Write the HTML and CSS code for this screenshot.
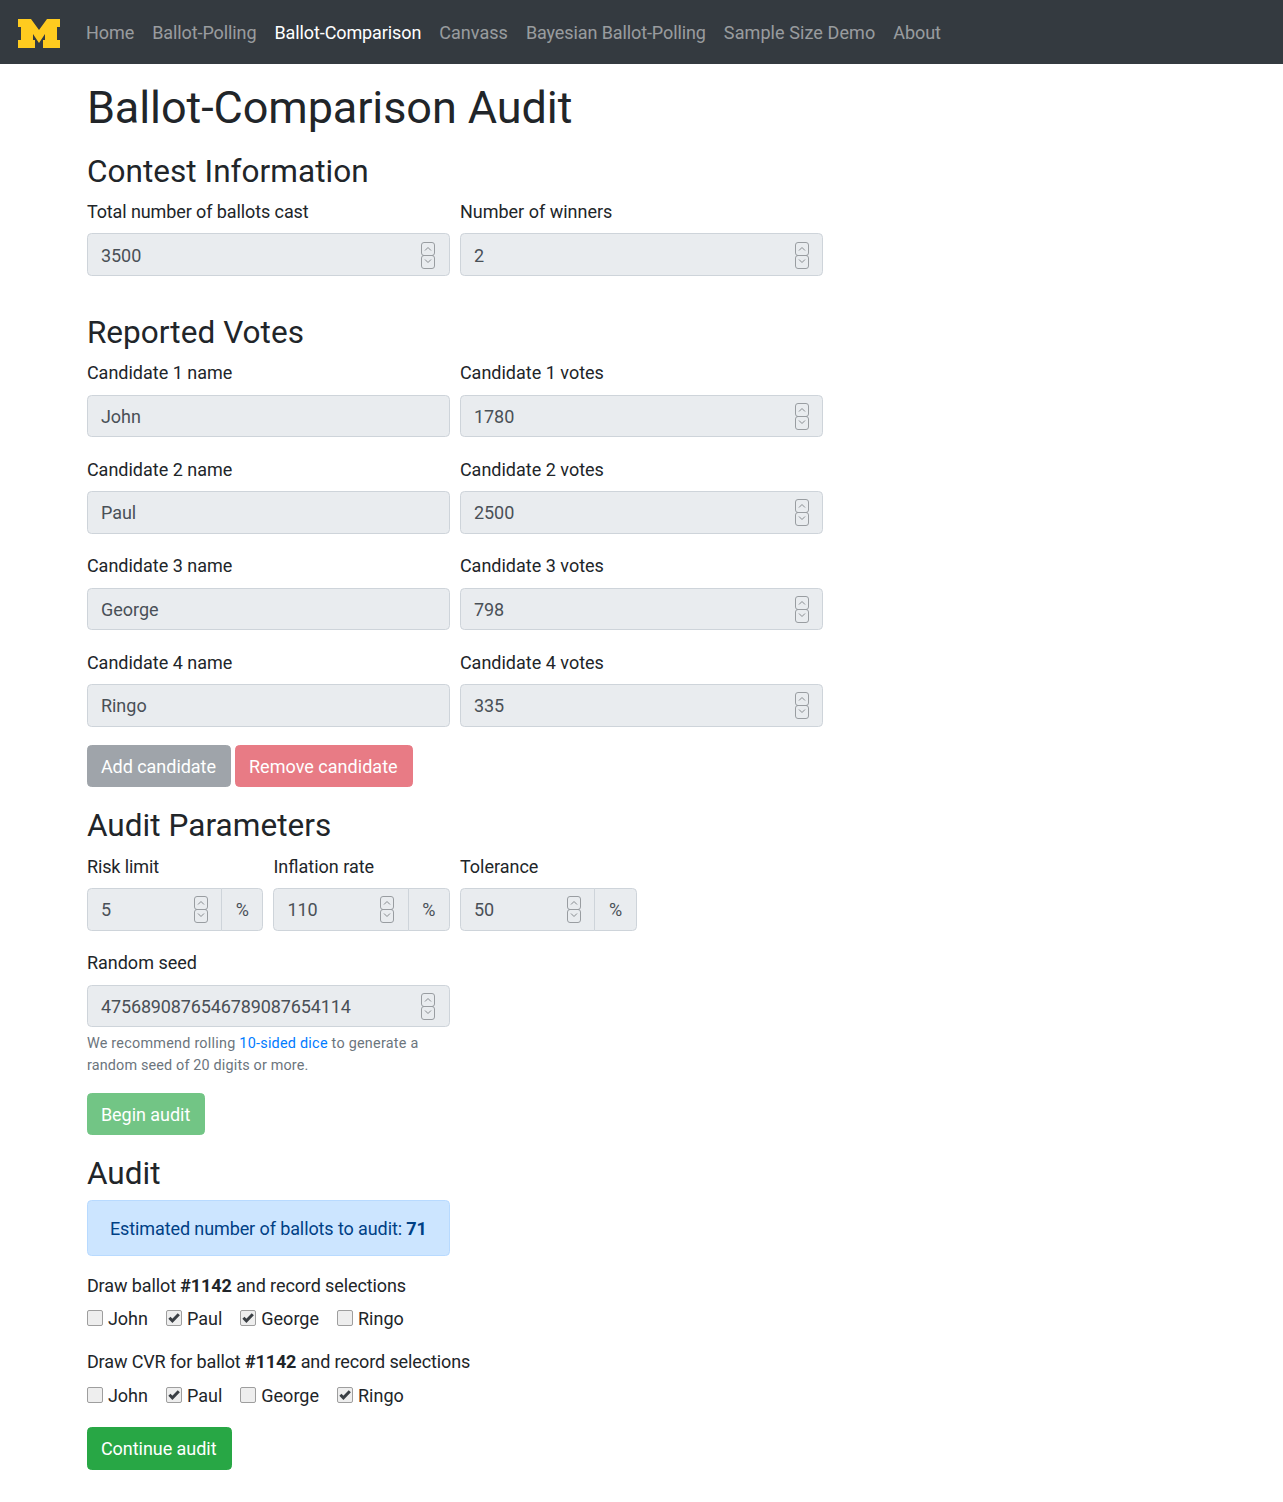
FILE: index.html
```html
<!DOCTYPE html>
<html lang="en">
<head>
<meta charset="utf-8">
<title>Ballot-Comparison Audit</title>
<link rel="stylesheet" href="styles.css">
</head>
<body>
<nav class="navbar">
  <a class="brand" href="#"><svg class="logo" viewBox="0 0 42 29"><path d="M0 0H13L21 11 29 0H42V8H39V21H42V29H25V21H27V15L21 24 15 15V21H17V29H0V21H3V8H0Z"/></svg></a>
  <a class="nav-link home" href="#">Home</a>
  <a class="nav-link" href="#">Ballot-Polling</a>
  <a class="nav-link active" href="#">Ballot-Comparison</a>
  <a class="nav-link plain" href="#">Canvass</a>
  <a class="nav-link" href="#">Bayesian Ballot-Polling</a>
  <a class="nav-link wide" href="#">Sample Size Demo</a>
  <a class="nav-link" href="#">About</a>
</nav>
<main class="main">
  <h1>Ballot-Comparison Audit</h1>
  <h3>Contest Information</h3>
  <div class="row section-end">
    <div class="col6 group"><label class="tight">Total number of ballots cast</label><input class="control nudge" type="number" value="3500" disabled></div>
    <div class="col6 group"><label>Number of winners</label><input class="control nudge" type="number" value="2" disabled></div>
  </div>
  <h3>Reported Votes</h3>
  <div class="row">
    <div class="col6 group"><label>Candidate 1 name</label><input class="control" type="text" value="John" disabled></div>
    <div class="col6 group"><label>Candidate 1 votes</label><input class="control" type="number" value="1780" disabled></div>
    <div class="col6 group"><label>Candidate 2 name</label><input class="control" type="text" value="Paul" disabled></div>
    <div class="col6 group"><label>Candidate 2 votes</label><input class="control" type="number" value="2500" disabled></div>
    <div class="col6 group"><label>Candidate 3 name</label><input class="control" type="text" value="George" disabled></div>
    <div class="col6 group"><label>Candidate 3 votes</label><input class="control" type="number" value="798" disabled></div>
    <div class="col6 group"><label>Candidate 4 name</label><input class="control" type="text" value="Ringo" disabled></div>
    <div class="col6 group"><label>Candidate 4 votes</label><input class="control" type="number" value="335" disabled></div>
  </div>
  <div class="buttons">
    <button class="btn grey" disabled>Add candidate</button>
    <button class="btn red" disabled>Remove candidate</button>
  </div>
  <h3>Audit Parameters</h3>
  <div class="row">
    <div class="col3 group"><label class="tight">Risk limit</label><div class="input-group"><input class="control" type="number" value="5" disabled><span class="append">%</span></div></div>
    <div class="col3 group"><label>Inflation rate</label><div class="input-group"><input class="control" type="number" value="110" disabled><span class="append">%</span></div></div>
    <div class="col3 group"><label>Tolerance</label><div class="input-group"><input class="control" type="number" value="50" disabled><span class="append">%</span></div></div>
  </div>
  <div class="row">
    <div class="col6 group"><label>Random seed</label><input class="control nudge seed" type="number" value="4756890876546789087654114" disabled>
      <small class="help"><span class="help-line first">We recommend rolling <a href="#">10-sided dice</a> to generate a</span><span class="help-line">random seed of 20 digits or more.</span></small>
    </div>
  </div>
  <div class="buttons">
    <button class="btn green" disabled>Begin audit</button>
  </div>
  <h3>Audit</h3>
  <div class="row">
    <div class="col6"><div class="alert">Estimated number of ballots to audit: <b>71</b></div></div>
  </div>
  <p class="draw">Draw ballot <b>#1142</b> and record selections</p>
  <div class="checks">
    <label class="check"><input type="checkbox" disabled>John</label>
    <label class="check"><input type="checkbox" checked disabled>Paul</label>
    <label class="check"><input type="checkbox" checked disabled>George</label>
    <label class="check"><input type="checkbox" disabled>Ringo</label>
  </div>
  <p class="draw cvr">Draw CVR for ballot <b>#1142</b> and record selections</p>
  <div class="checks">
    <label class="check"><input type="checkbox" disabled>John</label>
    <label class="check"><input type="checkbox" checked disabled>Paul</label>
    <label class="check"><input type="checkbox" disabled>George</label>
    <label class="check"><input type="checkbox" checked disabled>Ringo</label>
  </div>
  <button class="btn green live">Continue audit</button>
</main>
</body>
</html>
```
FILE: styles.css
```css
* { box-sizing: border-box; }
html { font-size: 18px; }
body {
  margin: 0;
  font-family: Roboto, "Liberation Sans", sans-serif;
  font-size: 18px;
  line-height: 1.5;
  color: #212529;
  background: #fff;
  letter-spacing: -0.1px;
}
a { text-decoration: none; color: #007bff; }
.navbar {
  display: flex;
  align-items: center;
  height: 64px;
  padding: 0 18px;
  background: #343a40;
}
.brand { display: flex; margin: 3px 17px 0 0; }
.logo { width: 42px; height: 29px; fill: #ffcb1f; }
.nav-link { padding: 9px; color: rgba(255, 255, 255, .5); }
.nav-link.active { color: #fff; }
.nav-link.home { letter-spacing: -0.05px; }
.nav-link.plain { letter-spacing: 0.03px; }
.nav-link.wide { letter-spacing: 0.09px; }
.main { padding: 17px 0 12px 86.9px; }
h1, h3 { margin: 0; font-weight: 400; line-height: 1.2; }
h1 { font-size: 45px; margin-bottom: 15.6px; letter-spacing: -0.09px; }
h3 { font-size: 31.5px; padding-top: 2px; margin-bottom: 7px; letter-spacing: 0.05px; }
.row { display: flex; flex-wrap: wrap; width: 746px; margin-left: -5px; }
.section-end { margin-bottom: 18.2px; }
.col6 { width: 50%; padding: 0 5px; }
.col3 { width: 25%; padding: 0 5px; }
.col3:last-child { padding-right: 4.8px; }
.group { margin-bottom: 18px; }
label { display: block; padding-top: 0.6px; margin-bottom: 8.4px; letter-spacing: 0; }
label.tight { letter-spacing: -0.1px; }
.control {
  display: block;
  width: 100%;
  height: 42.5px;
  padding: 6.75px 13.5px 6.75px 13px;
  font: inherit;
  letter-spacing: 0;
  color: #495057;
  background: #e9ecef;
  border: 1px solid #ced4da;
  border-radius: 4.5px;
  opacity: 1;
}
.col6:nth-child(even) .control { padding-right: 13.3px; }
.control.nudge { padding-top: 8.75px; }
.control.seed { letter-spacing: -0.12px; }
.control::-webkit-inner-spin-button {
  -webkit-appearance: none;
  display: block;
  width: 14px;
  height: 27px;
  margin-right: 0;
  opacity: 1;
  background: url("data:image/svg+xml,%3Csvg xmlns='http://www.w3.org/2000/svg' width='14' height='27' viewBox='0 0 14 27' fill='none' stroke='%23999da1'%3E%3Crect x='.5' y='.5' width='13' height='13' rx='2.5'/%3E%3Crect x='.5' y='13.5' width='13' height='13' rx='2.5'/%3E%3Cpath d='M4 8.5l3-3 3 3M4 17.5l3 3 3-3' stroke='%23878b8f'/%3E%3C/svg%3E") no-repeat center;
}
.input-group { display: flex; }
.input-group .control { flex: 1 1 0; min-width: 0; border-radius: 4.5px 0 0 4.5px; }
.append {
  display: flex;
  align-items: center;
  margin-left: -1px;
  padding: 6.75px 13.5px;
  letter-spacing: 0;
  color: #495057;
  background: #e9ecef;
  border: 1px solid #ced4da;
  border-radius: 0 4.5px 4.5px 0;
}
.help { display: block; margin: 5.5px 0 -1.8px; font-size: 14.4px; line-height: 22px; letter-spacing: 0.16px; color: #6c757d; }
.help-line { display: block; }
.help-line.first { letter-spacing: 0.24px; }
.buttons { display: flex; gap: 4px; margin-bottom: 18px; }
.btn {
  padding: 6.75px 14px 6.75px 13px;
  font: inherit;
  letter-spacing: -0.04px;
  color: #fff;
  border: 1px solid transparent;
  border-radius: 4.5px;
  opacity: .65;
}
.grey { background: #6c757d; border-color: #6c757d; }
.red { background: #dc3545; border-color: #dc3545; letter-spacing: 0.03px; }
.green { background: #28a745; border-color: #28a745; }
.live { opacity: 1; margin-top: 2px; }
.alert {
  padding: 13.5px 22.5px 13.5px 22px;
  margin-bottom: 16px;
  white-space: nowrap;
  color: #004085;
  background: #cce5ff;
  border: 1px solid #b8daff;
  border-radius: 4.5px;
}
b { font-weight: 700; }
.draw { margin: 0 0 6px; }
.draw.cvr { margin-bottom: 7px; letter-spacing: -0.12px; }
.checks { display: flex; margin-bottom: 16px; }
.check { display: flex; align-items: center; padding: 0; margin: 0 18px 0 0; letter-spacing: 0; }
.check input {
  -webkit-appearance: none;
  appearance: none;
  width: 16px;
  height: 16px;
  margin: 0 5px 1px 0;
  background: #eee;
  border: 1px solid #9e9e9e;
  border-radius: 2px;
}
.check input:checked {
  background: #eee url("data:image/svg+xml,%3Csvg xmlns='http://www.w3.org/2000/svg' viewBox='0 0 14 14' fill='none' stroke='%233a3f44' stroke-width='3'%3E%3Cpath d='M2.4 6.8l3 3L11.8 3.2'/%3E%3C/svg%3E") no-repeat center / 14px 14px;
}
```
